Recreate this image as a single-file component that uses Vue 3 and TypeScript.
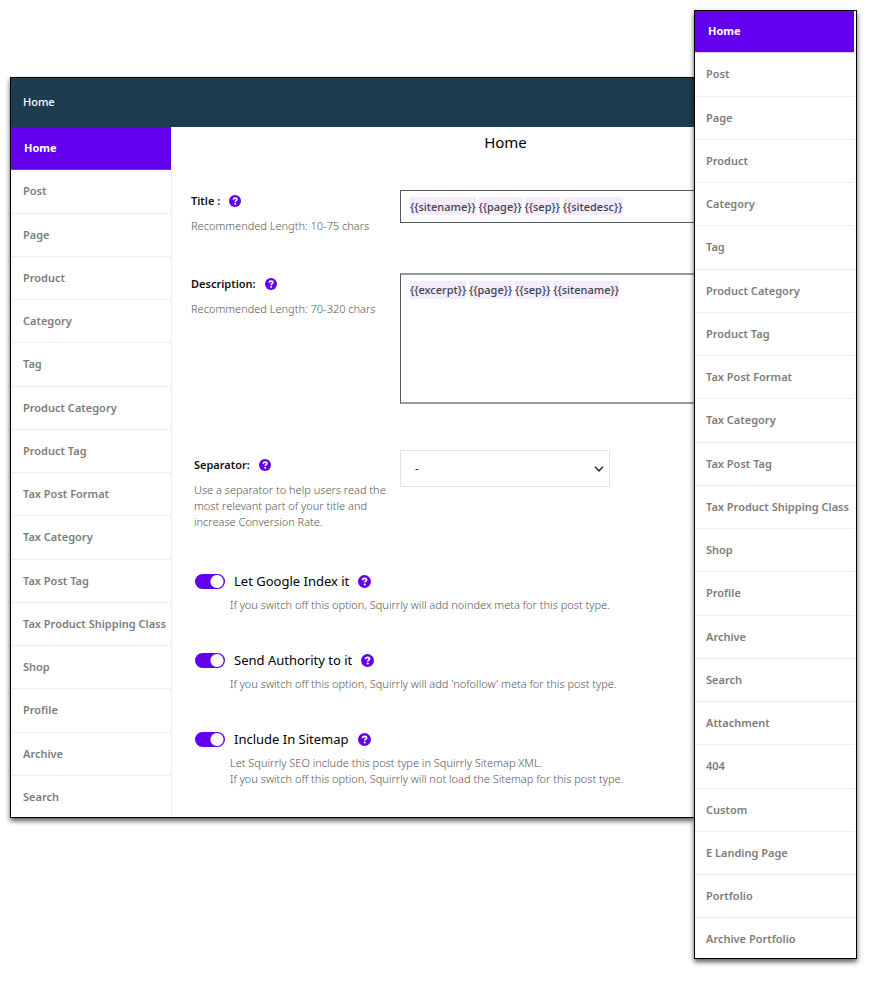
<script setup lang="ts">
import { defineComponent, h, ref, type CSSProperties } from 'vue'

interface Option {
  id: string
  label: string
  hint: string[]
}

const sideItems: string[] = [
  'Home', 'Post', 'Page', 'Product', 'Category', 'Tag', 'Product Category', 'Product Tag',
  'Tax Post Format', 'Tax Category', 'Tax Post Tag', 'Tax Product Shipping Class',
  'Shop', 'Profile', 'Archive', 'Search',
]
const allItems: string[] = [
  ...sideItems, 'Attachment', '404', 'Custom', 'E Landing Page', 'Portfolio', 'Archive Portfolio',
]

const options: Option[] = [
  {
    id: 'index',
    label: 'Let Google Index it',
    hint: ['If you switch off this option, Squirrly will add noindex meta for this post type.'],
  },
  {
    id: 'follow',
    label: 'Send Authority to it',
    hint: ["If you switch off this option, Squirrly will add 'nofollow' meta for this post type."],
  },
  {
    id: 'sitemap',
    label: 'Include In Sitemap',
    hint: [
      'Let Squirrly SEO include this post type in Squirrly Sitemap XML.',
      'If you switch off this option, Squirrly will not load the Sitemap for this post type.',
    ],
  },
]

const active = ref('Home')
const title = ref('{{sitename}} {{page}} {{sep}} {{sitedesc}}')
const description = ref('{{excerpt}} {{page}} {{sep}} {{sitename}}')
const separator = ref('-')
const enabled = ref<string[]>(options.map((o) => o.id))

// Tints the background behind each {{pattern}} of a field.
const pen = document.createElement('canvas').getContext('2d')!
function patternTint(text: string): CSSProperties {
  pen.font = '500 11px "Noto Sans"'
  const stops: string[] = []
  for (const m of text.matchAll(/\{\{\w+\}\}/g)) {
    const from = Math.round(pen.measureText(text.slice(0, m.index)).width)
    const to = Math.round(from + pen.measureText(m[0]).width)
    stops.push(`transparent ${from}px`, `#f4ebfe ${from}px`, `#f4ebfe ${to}px`, `transparent ${to}px`)
  }
  return stops.length ? { backgroundImage: `linear-gradient(to right, ${stops.join(', ')})` } : {}
}

const HelpIcon = defineComponent(() => () =>
  h('svg', { viewBox: '0 0 12 12', width: 12, height: 12, 'aria-hidden': 'true' }, [
    h('circle', { cx: 6, cy: 6, r: 6, fill: '#6200ee' }),
    h('path', {
      d: 'M4.2 4.7C4.3 3.6 5.1 3.1 6.1 3.1C7.2 3.1 7.9 3.7 7.9 4.6C7.9 5.7 6.2 5.6 6.2 6.9',
      fill: 'none', stroke: '#fff', 'stroke-width': 1.6,
    }),
    h('circle', { cx: 6.2, cy: 8.8, r: 1, fill: '#fff' }),
  ]),
)
</script>

<template>
  <div class="page">
    <section class="window">
      <header class="bar">Home</header>
      <div class="body">
        <nav class="menu side" aria-label="Post types">
          <a
            v-for="item in sideItems" :key="item" href="#" class="item"
            :class="{ active: item === active }" @click.prevent="active = item"
          >{{ item }}</a>
        </nav>
        <main class="content">
          <h1>Home</h1>
          <form class="form" @submit.prevent>
            <div class="row title-row">
              <div class="caption">
                <label for="title">Title : <HelpIcon class="help" /></label>
                <p>Recommended Length: 10-75 chars</p>
              </div>
              <input id="title" v-model="title" class="field" type="text" :style="patternTint(title)">
            </div>
            <div class="row description-row">
              <div class="caption">
                <label for="description">Description: <HelpIcon class="help" /></label>
                <p>Recommended Length: 70-320 chars</p>
              </div>
              <textarea
                id="description" v-model="description" class="field area"
                spellcheck="false" :style="patternTint(description)"
              />
            </div>
            <div class="row separator-row">
              <div class="caption inset">
                <label for="separator">Separator: <HelpIcon class="help" /></label>
                <p>Use a separator to help users read the most relevant part of your title and increase Conversion Rate.</p>
              </div>
              <div class="select">
                <select id="separator" v-model="separator">
                  <option value="-">-</option>
                </select>
                <svg class="chevron" viewBox="0 0 10 6" width="10" height="6" aria-hidden="true">
                  <path d="M1 0.8L5 4.8L9 0.8" fill="none" stroke="#333" stroke-width="1.6" />
                </svg>
              </div>
            </div>
            <div v-for="o in options" :key="o.id" class="option">
              <label :for="o.id">
                <input :id="o.id" v-model="enabled" type="checkbox" :value="o.id" class="switch">
                {{ o.label }}
                <HelpIcon class="help large" />
              </label>
              <p v-for="line in o.hint" :key="line">{{ line }}</p>
            </div>
          </form>
        </main>
      </div>
    </section>

    <nav class="menu panel" aria-label="All post types">
      <a
        v-for="item in allItems" :key="item" href="#" class="item"
        :class="{ active: item === active }" @click.prevent="active = item"
      >{{ item }}</a>
    </nav>
  </div>
</template>

<style>
body {
  background: #fff;
}
</style>

<style scoped>
.page,
.page * {
  box-sizing: border-box;
}

.page {
  display: flex;
  align-items: flex-start;
  padding: 10px 13px 23px 10px;
  font-family: 'Noto Sans', sans-serif;
  font-size: 11px;
  color: #111;
}

.window {
  flex: 1;
  min-width: 0;
  margin-top: 67px;
  border: 1px solid #000;
  border-right: 0;
  background: #fff;
  box-shadow: 0 3px 5px rgba(0, 0, 0, 0.65);
}

.bar {
  height: 49px;
  padding: 0 12px;
  line-height: 48px;
  font-weight: 500;
  background: #1d3c50;
  color: #fff;
}

.body {
  display: flex;
  overflow: hidden;
}

.menu {
  display: flex;
  flex-direction: column;
}

.item {
  flex: none;
  height: 43px;
  padding-left: 12px;
  border-bottom: 1px solid #eee;
  line-height: 42px;
  font-weight: 600;
  color: #7c7c7c;
  text-decoration: none;
  white-space: nowrap;
}

.item:nth-child(4n + 2) {
  height: 44px;
}

.item.active {
  padding-left: 13px;
  border-bottom-color: #7f33f1;
  background: #6200ee;
  color: #fff;
  font-weight: 700;
}

.side {
  flex: none;
  width: 161px;
  border-right: 1px solid #eee;
}

.side .item:last-child {
  height: 41px;
  border-bottom: 0;
}

.panel {
  position: relative;
  flex: none;
  width: 163px;
  padding-right: 2px;
  border: 1px solid #000;
  background: #fff;
  box-shadow: 0 3px 5px rgba(0, 0, 0, 0.65);
}

.panel .item {
  padding-left: 11px;
}

.panel .item.active {
  padding-left: 13px;
  border-bottom-color: #d9c6fa;
}

.panel .item:first-child {
  height: 42px;
  line-height: 40px;
}

.panel .item:last-child {
  height: 40px;
  border-bottom: 0;
}

.content {
  flex: none;
  width: calc(100% - 16px);
}

h1 {
  margin: 4px 0 0;
  line-height: 22px;
  font-size: 15px;
  font-weight: 400;
  text-align: center;
  color: #000;
}

.form {
  padding: 37px 0 0 19px;
}

.row {
  display: grid;
  grid-template-columns: 209px 1fr;
  align-items: start;
}

.title-row {
  min-height: 83px;
}

.description-row {
  min-height: 177px;
}

.separator-row {
  min-height: 120px;
}

.caption {
  padding: 1px 9px 0 0;
}

.caption.inset {
  padding: 5px 8px 0 3px;
}

.caption label {
  display: flex;
  align-items: center;
  line-height: 20px;
  font-weight: 600;
}

.help {
  margin-left: 9px;
}

.help.large {
  width: 13px;
  height: 13px;
}

p {
  margin: 0;
  line-height: 16px;
  font-weight: 300;
  color: #555;
}

.caption p {
  margin-top: 7px;
}

.field {
  display: block;
  width: 100%;
  height: 33px;
  margin: 0;
  padding: 6px 9px;
  border: 1px solid #50575e;
  border-radius: 0;
  background: #fff no-repeat left top / 100% 18px content-box content-box;
  line-height: 18px;
  font-family: inherit;
  font-size: 11px;
  font-weight: 500;
  color: #3c434a;
  outline: 0;
}

.area {
  height: 131px;
  border-width: 2px 1px;
  border-color: #96999d #50575e;
  resize: none;
}

.select {
  position: relative;
  width: 210px;
}

select {
  display: block;
  width: 100%;
  height: 37px;
  padding: 0 14px;
  border: 1px solid #e4e4e4;
  border-radius: 0;
  background: #fff;
  font-family: inherit;
  font-size: 12px;
  color: #333;
  appearance: none;
}

.chevron {
  position: absolute;
  top: 16px;
  right: 6px;
  pointer-events: none;
}

.option {
  min-height: 79px;
  padding-left: 39px;
}

.option label {
  display: flex;
  align-items: center;
  gap: 9px;
  margin-left: -35px;
  line-height: 22px;
  font-size: 13px;
  font-weight: 400;
  color: #000;
}

.option .help {
  margin-left: 0;
}

.option p:nth-of-type(1) {
  margin-top: 5px;
}

.switch {
  width: 30px;
  height: 15px;
  margin: 0;
  border-radius: 8px;
  background: #bbb radial-gradient(circle at 8px 50%, #fff 6px, transparent 7px);
  appearance: none;
}

.switch:checked {
  background: #6200ee radial-gradient(circle at 22px 50%, #fff 6px, transparent 7px);
}
</style>
